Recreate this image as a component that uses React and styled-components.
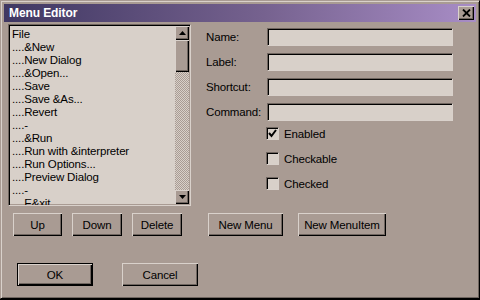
import React from "react";
import styled, { createGlobalStyle, css } from "styled-components";

const Global = createGlobalStyle`
  html, body { margin: 0; padding: 0; background: #000; }
  body { width: 480px; height: 300px; overflow: hidden; font-family: "Liberation Sans", Arial, sans-serif; }
`;

const C = {
  face: "#a99b93",
  light: "#d9d1cb",
  field: "#d8d0c9",
  shadow: "#6f655f",
  dark: "#000",
};

const Window = styled.div`
  box-sizing: border-box;
  width: 480px;
  height: 299px;
  background: ${C.face};
  border-top: 1px solid ${C.face};
  border-left: 1px solid ${C.face};
  border-right: 1px solid ${C.dark};
  border-bottom: 1px solid ${C.dark};
  box-shadow: inset 1px 1px 0 ${C.light}, inset -1px -1px 0 ${C.shadow};
  padding: 3px 3px 0 3px;
  display: flex;
  flex-direction: column;
`;

const TitleBar = styled.div`
  height: 18px;
  background: linear-gradient(to right, #3f3762, #76628f 55%, #a88dc6);
  display: flex;
  align-items: center;
  justify-content: space-between;
  padding: 0 2px 0 5px;
`;

const Title = styled.span`
  color: #fff;
  font-weight: bold;
  font-size: 12px;
  letter-spacing: -0.1px;
`;

const CloseBtn = styled.div`
  width: 16px;
  height: 14px;
  box-sizing: border-box;
  background: ${C.face};
  box-shadow: inset 1px 1px 0 ${C.light}, inset -1px -1px 0 ${C.dark}, inset -2px -2px 0 ${C.shadow};
  display: flex;
  align-items: center;
  justify-content: center;
`;

const Body = styled.div`
  padding: 2px 0 0 4px;
  display: flex;
  flex-direction: column;
`;

const TopRow = styled.div`
  display: flex;
  align-items: flex-start;
`;

const ListBox = styled.div`
  box-sizing: border-box;
  width: 183px;
  height: 182px;
  background: ${C.field};
  border-top: 1px solid ${C.shadow};
  border-left: 1px solid ${C.shadow};
  border-right: 1px solid ${C.light};
  border-bottom: 1px solid ${C.light};
  box-shadow: inset 1px 1px 0 ${C.dark}, inset -1px -1px 0 ${C.face};
  display: flex;
  overflow: hidden;
`;

const Items = styled.div`
  flex: 1;
  padding: 3px 0 0 3px;
  overflow: hidden;
`;

const Item = styled.div`
  font-size: 11.5px;
  line-height: 13px;
  height: 13px;
  letter-spacing: -0.15px;
  white-space: nowrap;
  color: #000;
`;

const ScrollBar = styled.div`
  width: 14px;
  margin: 1px 1px 1px 0;
  display: flex;
  flex-direction: column;
  background-color: ${C.field};
  background-image: repeating-conic-gradient(${C.face} 0 25%, ${C.field} 0 50%);
  background-size: 2px 2px;
`;

const bevel = css`
  background: ${C.face};
  box-shadow: inset 1px 1px 0 ${C.light}, inset -1px -1px 0 ${C.dark}, inset -2px -2px 0 ${C.shadow};
`;

const Arrow = styled.div`
  ${bevel};
  height: 14px;
  display: flex;
  align-items: center;
  justify-content: center;
`;

const Thumb = styled.div`
  ${bevel};
  height: 32px;
`;

const Track = styled.div`
  flex: 1;
`;

const RightPanel = styled.div`
  margin-left: 15px;
  padding-top: 4px;
  display: flex;
  flex-direction: column;
`;

const FieldRow = styled.div`
  display: flex;
  align-items: center;
  height: 18px;
  margin-bottom: 7px;
`;

const Label = styled.label`
  width: 61px;
  font-size: 11.5px;
  letter-spacing: -0.15px;
  color: #000;
`;

const Input = styled.div`
  box-sizing: border-box;
  width: 186px;
  height: 18px;
  background: ${C.field};
  border-top: 1px solid ${C.shadow};
  border-left: 1px solid ${C.shadow};
  border-right: 1px solid ${C.light};
  border-bottom: 1px solid ${C.light};
  box-shadow: inset 1px 1px 0 ${C.dark};
`;

const CheckRow = styled.div`
  display: flex;
  align-items: center;
  height: 13px;
  margin-left: 60px;
  margin-top: ${(p) => (p.$first ? "-1px" : "12px")};
`;

const Box = styled.div`
  box-sizing: border-box;
  width: 13px;
  height: 13px;
  background: ${C.field};
  border-top: 1px solid ${C.shadow};
  border-left: 1px solid ${C.shadow};
  border-right: 1px solid ${C.light};
  border-bottom: 1px solid ${C.light};
  box-shadow: inset 1px 1px 0 ${C.dark};
  display: flex;
  align-items: center;
  justify-content: center;
`;

const CheckText = styled.span`
  margin-left: 5px;
  font-size: 11.5px;
  letter-spacing: -0.15px;
  color: #000;
`;

const ButtonRow = styled.div`
  display: flex;
  margin-top: 7px;
  margin-left: 5px;
  height: 23px;
`;

const Button = styled.div`
  box-sizing: border-box;
  width: ${(p) => p.$w}px;
  height: ${(p) => p.$h || 23}px;
  margin-left: ${(p) => p.$gap || 0}px;
  background: ${C.face};
  font-size: 11.5px;
  letter-spacing: -0.15px;
  color: #000;
  display: flex;
  align-items: center;
  justify-content: center;
  box-shadow: ${(p) =>
    p.$default
      ? `inset 0 0 0 1px ${C.dark}, inset 2px 2px 0 ${C.light}, inset -2px -2px 0 ${C.dark}, inset -3px -3px 0 ${C.shadow}`
      : `inset 1px 1px 0 ${C.light}, inset -1px -1px 0 ${C.dark}, inset -2px -2px 0 ${C.shadow}`};
`;

const BottomRow = styled.div`
  display: flex;
  margin-top: 27px;
  margin-left: 9px;
`;

const items = [
  "File",
  "....&New",
  "....New Dialog",
  "....&Open...",
  "....Save",
  "....Save &As...",
  "....Revert",
  "....-",
  "....&Run",
  "....Run with &interpreter",
  "....Run Options...",
  "....Preview Dialog",
  "....-",
  "....E&xit",
];

const TriUp = () => (
  <svg width="7" height="4" viewBox="0 0 7 4"><path d="M3.5 0 L7 4 L0 4 Z" fill="#000" /></svg>
);
const TriDown = () => (
  <svg width="7" height="4" viewBox="0 0 7 4"><path d="M0 0 L7 0 L3.5 4 Z" fill="#000" /></svg>
);

export default function App() {
  return (
    <>
      <Global />
      <Window>
        <TitleBar>
          <Title>Menu Editor</Title>
          <CloseBtn>
            <svg width="9" height="8" viewBox="0 0 9 8">
              <path d="M1 0.5 L8 7.5 M8 0.5 L1 7.5" stroke="#000" strokeWidth="1.8" />
            </svg>
          </CloseBtn>
        </TitleBar>
        <Body>
          <TopRow>
            <ListBox>
              <Items>
                {items.map((t, i) => (
                  <Item key={i}>{t}</Item>
                ))}
              </Items>
              <ScrollBar>
                <Arrow><TriUp /></Arrow>
                <Thumb />
                <Track />
                <Arrow><TriDown /></Arrow>
              </ScrollBar>
            </ListBox>
            <RightPanel>
              {["Name:", "Label:", "Shortcut:", "Command:"].map((l) => (
                <FieldRow key={l}>
                  <Label>{l}</Label>
                  <Input />
                </FieldRow>
              ))}
              <CheckRow $first>
                <Box>
                  <svg width="9" height="9" viewBox="0 0 9 9">
                    <path d="M1 4 L3.5 7 L8 1" stroke="#000" strokeWidth="2" fill="none" />
                  </svg>
                </Box>
                <CheckText>Enabled</CheckText>
              </CheckRow>
              <CheckRow>
                <Box />
                <CheckText>Checkable</CheckText>
              </CheckRow>
              <CheckRow>
                <Box />
                <CheckText>Checked</CheckText>
              </CheckRow>
            </RightPanel>
          </TopRow>
          <ButtonRow>
            <Button $w={49}>Up</Button>
            <Button $w={50} $gap={10}>Down</Button>
            <Button $w={50} $gap={10}>Delete</Button>
            <Button $w={75} $gap={26}>New Menu</Button>
            <Button $w={88} $gap={15}>New MenuItem</Button>
          </ButtonRow>
          <BottomRow>
            <Button $w={76} $default>OK</Button>
            <Button $w={76} $gap={29}>Cancel</Button>
          </BottomRow>
        </Body>
      </Window>
    </>
  );
}
